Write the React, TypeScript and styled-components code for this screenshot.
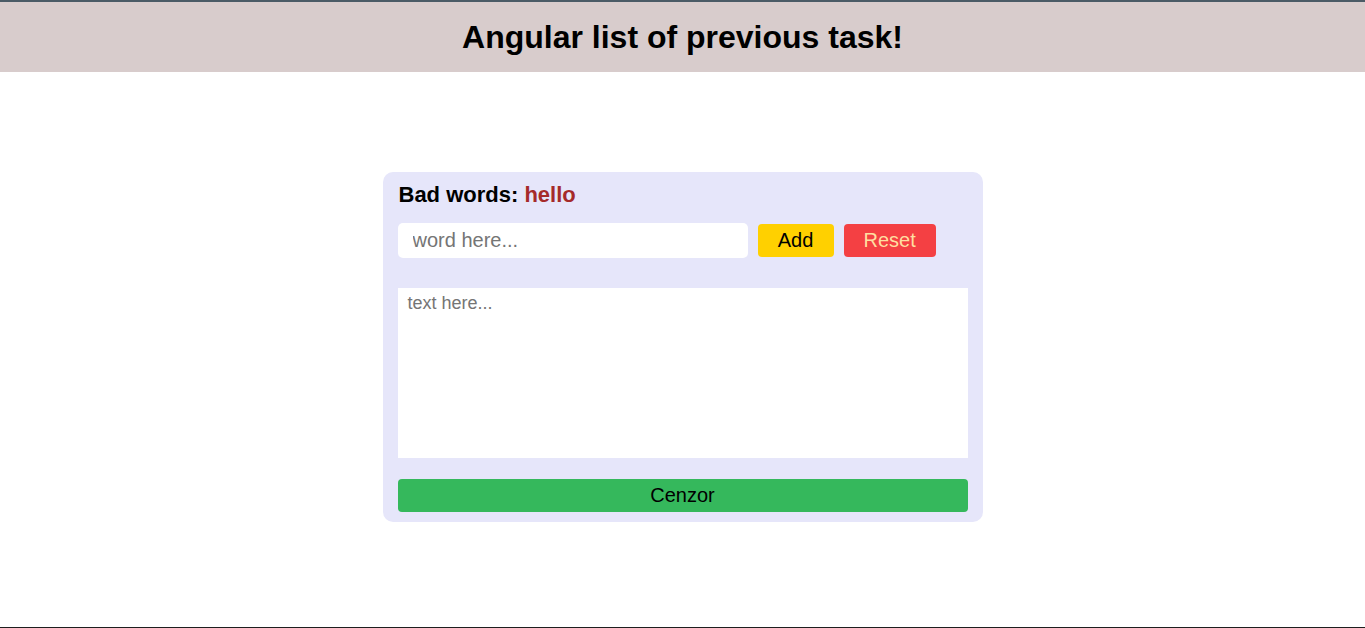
import React, { useState } from "react";
import styled, { createGlobalStyle } from "styled-components";

const GlobalStyle = createGlobalStyle`
  html, body { margin: 0; padding: 0; }
  body { font-family: "Liberation Sans", Arial, sans-serif; background: #fff; }
  * { box-sizing: border-box; }
`;

const Page = styled.div`
  min-height: 100vh;
  border-top: 2px solid #4b5b66;
  border-bottom: 1px solid #1e1e1e;
  display: flex;
  flex-direction: column;
`;

const Header = styled.header`
  height: 70px;
  background: #d8cccc;
  display: flex;
  align-items: center;
  justify-content: center;
`;

const Title = styled.h1`
  margin: 0;
  font-size: 32px;
  font-weight: 700;
  color: #000;
`;

const Main = styled.main`
  display: flex;
  justify-content: center;
  padding-top: 100px;
`;

const Card = styled.section`
  width: 600px;
  background: #e6e6fa;
  border-radius: 10px;
  padding: 10px 15px 10px 16px;
  display: flex;
  flex-direction: column;
`;

const Heading = styled.h2`
  margin: 0;
  font-size: 22px;
  font-weight: 700;
  color: #000;
  line-height: 25px;
`;

const Words = styled.span`
  color: #a52a2a;
`;

const Row = styled.div`
  display: flex;
  align-items: center;
  gap: 10px;
  margin-top: 16px;
  margin-left: -1px;
`;

const WordInput = styled.input`
  width: 350px;
  height: 35px;
  border: none;
  border-radius: 5px;
  padding: 0 15px;
  font-family: "Liberation Sans", Arial, sans-serif;
  font-size: 20px;
  outline: none;
  &::placeholder { color: #757575; }
`;

const Button = styled.button<{ $bg: string; $fg: string; $w?: number }>`
  height: 33px;
  width: ${(p) => (p.$w ? `${p.$w}px` : "auto")};
  padding: 0 20px;
  border: none;
  border-radius: 4px;
  background: ${(p) => p.$bg};
  color: ${(p) => p.$fg};
  font-family: "Liberation Sans", Arial, sans-serif;
  font-size: 20px;
  cursor: pointer;
`;

const TextArea = styled.textarea`
  margin-top: 30px;
  margin-left: -1px;
  width: 570px;
  height: 170px;
  border: none;
  border-radius: 0;
  padding: 5px 10px;
  resize: none;
  font-family: "Liberation Sans", Arial, sans-serif;
  font-size: 18px;
  outline: none;
  display: block;
  &::placeholder { color: #757575; }
`;

const WideButton = styled(Button)`
  margin-top: 21px;
  margin-left: -1px;
  width: 570px;
`;

export default function App() {
  const [word, setWord] = useState("");
  const [words, setWords] = useState<string[]>(["hello"]);
  const [text, setText] = useState("");

  return (
    <>
      <GlobalStyle />
      <Page>
        <Header>
          <Title>Angular list of previous task!</Title>
        </Header>
        <Main>
          <Card>
            <Heading>
              Bad words: <Words>{words.join(", ")}</Words>
            </Heading>
            <Row>
              <WordInput
                placeholder="word here..."
                value={word}
                onChange={(e) => setWord(e.target.value)}
              />
              <Button
                $bg="#ffd000"
                $fg="#000"
                $w={76}
                onClick={() => {
                  if (word.trim()) setWords([...words, word.trim()]);
                  setWord("");
                }}
              >
                Add
              </Button>
              <Button $bg="#f44043" $fg="#ffdea0" $w={92} onClick={() => setWords([])}>
                Reset
              </Button>
            </Row>
            <TextArea
              placeholder="text here..."
              value={text}
              onChange={(e) => setText(e.target.value)}
            />
            <WideButton $bg="#35b85c" $fg="#000">
              Cenzor
            </WideButton>
          </Card>
        </Main>
      </Page>
    </>
  );
}
